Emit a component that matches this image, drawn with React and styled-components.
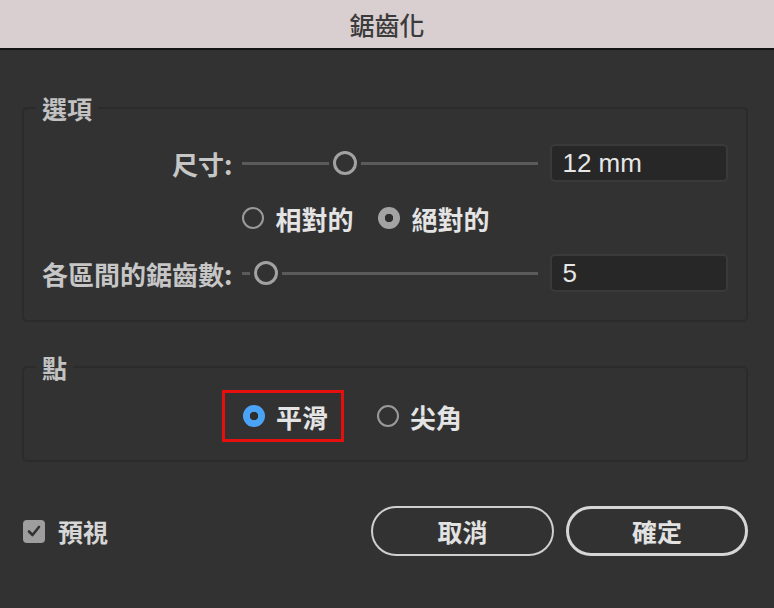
import styled, { createGlobalStyle } from "styled-components";

const GlobalStyle = createGlobalStyle`
  html, body {
    margin: 0;
    padding: 0;
    background: #323232;
  }
  body {
    font-family: "Noto Sans CJK TC", "Noto Sans", sans-serif;
  }
`;

const Window = styled.div`
  width: 774px;
  height: 608px;
  background: #323232;
  display: flex;
  flex-direction: column;
  overflow: hidden;
`;

const TitleBar = styled.div`
  height: 48px;
  flex: none;
  background: #d9cfd0;
  border-bottom: 2px solid #151515;
  display: flex;
  align-items: center;
  justify-content: center;
  color: #3b3b3b;
  font-size: 25px;
  font-weight: 500;
`;

const Body = styled.div`
  display: flex;
  flex-direction: column;
  padding: 45px 26px 0 22px;
`;

const Group = styled.fieldset`
  margin: ${(p) => p.$top || 0}px 0 0;
  border: 2px solid #2b2b2b;
  border-radius: 5px;
  padding: ${(p) => p.$pad};
  min-width: 0;
`;

const Legend = styled.legend`
  margin-left: -6px;
  padding: 0 6px;
  color: #c2c2c2;
  font-size: 25px;
  font-weight: 700;
  line-height: 26px;
`;

const OptionGrid = styled.div`
  display: grid;
  grid-template-columns: 1fr 294px 178px;
  grid-auto-rows: 38px;
  column-gap: 12px;
  row-gap: 17px;
  align-items: center;
`;

const Label = styled.div`
  text-align: right;
  color: #c6c6c6;
  font-size: 26px;
  font-weight: 700;
  white-space: nowrap;
`;

const SliderBox = styled.div`
  position: relative;
  height: 26px;
  display: flex;
  align-items: center;
  margin-left: -2px;
`;

const Track = styled.div`
  width: 100%;
  height: 3px;
  background: #5b5b5b;
`;

const Thumb = styled.div`
  position: absolute;
  top: 1px;
  width: 18px;
  height: 18px;
  border: 3px solid #a2a2a2;
  border-radius: 50%;
  background: #323232;
  box-shadow: 0 0 0 4px #323232;
  transform: translateX(-50%);
`;

const Field = styled.div`
  height: 38px;
  box-sizing: border-box;
  background: #272727;
  border: 2px solid #3a3a3a;
  border-radius: 5px;
  padding: 0 10px;
  display: flex;
  align-items: center;
  color: #e6e6e6;
  font-family: "Liberation Sans", Arial, sans-serif;
  font-size: 26px;
`;

const RadioRow = styled.div`
  grid-column: 2 / 4;
  display: flex;
  align-items: center;
  gap: 25px;
  margin-left: -2px;
`;

const RadioItem = styled.div`
  display: flex;
  align-items: center;
  gap: 11px;
  color: #e4e4e4;
  font-size: 26px;
  font-weight: 700;
  ${(p) =>
    p.$highlight &&
    `
    border: 3px solid #e5100e;
    padding: 0 13px 0 18px;
    height: 46px;
  `}
`;

const RadioDot = styled.span`
  width: 22px;
  height: 22px;
  box-sizing: border-box;
  border-radius: 50%;
  flex: none;
  border: ${(p) => (p.$color ? "none" : "2px solid #9a9a9a")};
  background: ${(p) =>
    p.$color
      ? `radial-gradient(circle, #2e2e2e 0 4px, ${p.$color} 4.5px)`
      : "transparent"};
`;

const PointRow = styled.div`
  display: flex;
  align-items: center;
  gap: 33px;
  margin-left: 180px;
`;

const Footer = styled.div`
  display: flex;
  align-items: center;
  margin-top: 44px;
  margin-left: 1px;
`;

const Check = styled.label`
  display: flex;
  align-items: center;
  gap: 13px;
  color: #d6d6d6;
  font-size: 25px;
  font-weight: 700;
  flex: 1;
`;

const CheckBox = styled.span`
  width: 22px;
  height: 23px;
  border-radius: 4px;
  background: #9e9e9e;
  display: flex;
  align-items: center;
  justify-content: center;
`;

const Buttons = styled.div`
  display: flex;
  gap: 12px;
`;

const Button = styled.button`
  width: ${(p) => p.$w}px;
  height: 50px;
  border-radius: 25px;
  background: transparent;
  border: ${(p) => (p.$primary ? "3px solid #d6d6d6" : "2px solid #cfcfcf")};
  color: #e2e2e2;
  font-family: inherit;
  font-size: 25px;
  font-weight: 700;
  padding: 0;
`;

const Slider = ({ value }) => (
  <SliderBox>
    <Track />
    <Thumb style={{ left: `${value * 100}%` }} />
  </SliderBox>
);

const Radio = ({ label, color, highlight }) => (
  <RadioItem $highlight={highlight}>
    <RadioDot $color={color} />
    {label}
  </RadioItem>
);

export default function App() {
  return (
    <Window>
      <GlobalStyle />
      <TitleBar>鋸齒化</TitleBar>
      <Body>
        <Group $pad="23px 18px 28px 18px">
          <Legend>選項</Legend>
          <OptionGrid>
            <Label>尺寸:</Label>
            <Slider value={0.348} />
            <Field>12 mm</Field>
            <RadioRow>
              <Radio label="相對的" />
              <Radio label="絕對的" color="#a3a3a3" />
            </RadioRow>
            <Label>各區間的鋸齒數:</Label>
            <Slider value={0.078} />
            <Field>5</Field>
          </OptionGrid>
        </Group>
        <Group $pad="10px 18px 18px 18px" $top={32}>
          <Legend>點</Legend>
          <PointRow>
            <Radio label="平滑" color="#4aa3f5" highlight />
            <Radio label="尖角" />
          </PointRow>
        </Group>
        <Footer>
          <Check>
            <CheckBox>
              <svg width="14" height="12" viewBox="0 0 14 12">
                <path
                  d="M2 6.5 L5.5 10 L12 2"
                  fill="none"
                  stroke="#333"
                  strokeWidth="2.6"
                  strokeLinecap="round"
                  strokeLinejoin="round"
                />
              </svg>
            </CheckBox>
            預視
          </Check>
          <Buttons>
            <Button $w={183}>取消</Button>
            <Button $w={182} $primary>
              確定
            </Button>
          </Buttons>
        </Footer>
      </Body>
    </Window>
  );
}
